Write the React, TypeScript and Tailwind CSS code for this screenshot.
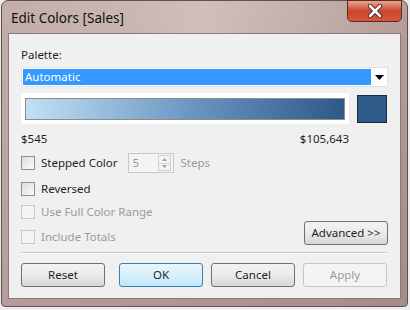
import { ReactNode } from 'react';

function Checkbox({ label, disabled }: { label: string; disabled?: boolean }) {
  return (
    <div className="flex items-center gap-[6px]">
      <div
        className={`w-[14px] h-[14px] border ${
          disabled ? 'border-[#c9c9c9] bg-[#f4f4f4]' : 'border-[#8e8f8f] bg-gradient-to-br from-[#dcdcdc] to-[#fbfbfb]'
        }`}
      />
      <span className={disabled ? 'text-[#9a9a9a]' : 'text-[#1e1e1e]'}>{label}</span>
    </div>
  );
}

function Button({ children, variant }: { children: ReactNode; variant?: 'default' | 'disabled' }) {
  let cls = 'border-[#707070] bg-gradient-to-b from-[#f2f2f2] via-[#ebebeb] to-[#d6d6d6] text-[#1e1e1e]';
  if (variant === 'default') cls = 'border-[#3c7fb1] bg-gradient-to-b from-[#eaf6fd] via-[#d9f0fc] to-[#bee6fd] text-[#1e1e1e]';
  if (variant === 'disabled') cls = 'border-[#c3c6c8] bg-[#f4f4f4] text-[#9a9a9a]';
  return (
    <div className={`w-[84px] h-[24px] rounded-[3px] border flex items-center justify-center ${cls}`}>
      {children}
    </div>
  );
}

export default function App() {
  return (
    <div className="w-[410px] h-[310px] bg-[#ececec] overflow-hidden" style={{ fontFamily: '"Noto Sans", "Open Sans", sans-serif' }}>
      <div className="ml-[1px] w-[407px] h-[307px] rounded-t-[7px] rounded-b-[4px] border border-[#5e514f] bg-gradient-to-br from-[#c4aeaa] via-[#b59e9a] to-[#a38d8b] relative">
        {/* title bar */}
        <div className="h-[32px] flex items-center pl-[9px] pt-[3px] bg-gradient-to-r from-transparent via-[#dccfcc]/60 to-transparent">
          <span className="text-[13.5px] text-[#111]">Edit Colors [Sales]</span>
        </div>
        <div className="absolute top-[-1px] right-[5px] w-[55px] h-[22px] rounded-b-[5px] border border-[#5a2a22] bg-gradient-to-b from-[#e8a593] via-[#c9442c] to-[#d8583c] flex items-center justify-center">
          <svg width="16" height="14" viewBox="0 0 16 14">
            <path d="M3 2 L13 12 M13 2 L3 12" stroke="#3a1510" strokeWidth="4.2" strokeLinecap="round" />
            <path d="M3 2 L13 12 M13 2 L3 12" stroke="#ffffff" strokeWidth="2.6" strokeLinecap="round" />
          </svg>
        </div>

        {/* client area */}
        <div className="mx-[6px] h-[266px] border border-[#8a7a77] bg-[#f0f0f0] px-[12px] pt-[14px] text-[11.5px] leading-[14px]">
          <div className="text-[#1e1e1e]">Palette:</div>

          <div className="mt-[5px] h-[20px] w-[367px] bg-white border border-[#e2e2e2] flex items-center pl-[1px]">
            <div className="h-[16px] flex-1 bg-[#3399ff] text-white flex items-center pl-[2px]">Automatic</div>
            <div className="w-[16px] flex items-center justify-center">
              <svg width="9" height="5" viewBox="0 0 9 5">
                <path d="M0 0 H9 L4.5 5 Z" fill="#000" />
              </svg>
            </div>
          </div>

          <div className="mt-[6px] flex items-center">
            <div className="w-[328px] h-[31px] bg-white flex items-center justify-center">
              <div className="w-[320px] h-[22px] border border-[#8c8c8c] bg-gradient-to-r from-[#c3e0f3] via-[#6d9ac4] to-[#2c5987]" />
            </div>
            <div className="ml-[8px] w-[30px] h-[28px] border border-[#1b2b3c] bg-[#2d5a88]" />
          </div>

          <div className="mt-[8px] w-[328px] flex justify-between text-[#1e1e1e]">
            <span>$545</span>
            <span>$105,643</span>
          </div>

          <div className="mt-[7px] h-[20px] flex items-center">
            <Checkbox label="Stepped Color" />
            <div className="ml-[10px] w-[46px] h-[20px] border border-[#c9c9c9] bg-[#f4f4f4] flex items-center">
              <span className="pl-[4px] flex-1 text-[#9a9a9a]">5</span>
              <div className="w-[13px] h-[16px] mr-[2px] border border-[#d2d2d2] flex flex-col">
                <div className="flex-1 flex items-center justify-center border-b border-[#d2d2d2]">
                  <svg width="5" height="3" viewBox="0 0 5 3"><path d="M0 3 L2.5 0 L5 3 Z" fill="#a0a0a0" /></svg>
                </div>
                <div className="flex-1 flex items-center justify-center">
                  <svg width="5" height="3" viewBox="0 0 5 3"><path d="M0 0 L2.5 3 L5 0 Z" fill="#a0a0a0" /></svg>
                </div>
              </div>
            </div>
            <span className="ml-[7px] text-[#9a9a9a]">Steps</span>
          </div>

          <div className="mt-[6px] h-[20px] flex items-center">
            <Checkbox label="Reversed" />
          </div>

          <div className="mt-[3px] h-[20px] flex items-center">
            <Checkbox label="Use Full Color Range" disabled />
          </div>

          <div className="h-[23px] flex justify-between items-end">
            <div className="mb-[1px]">
              <Checkbox label="Include Totals" disabled />
            </div>
            <div className="w-[84px] h-[24px] rounded-[3px] border border-[#707070] bg-gradient-to-b from-[#f2f2f2] via-[#ebebeb] to-[#d6d6d6] text-[#1e1e1e] flex items-center justify-center">
              Advanced &gt;&gt;
            </div>
          </div>

          <div className="mt-[7px] border-t border-[#c8c8c8] border-b border-b-white" />

          <div className="mt-[9px] flex">
            <Button>Reset</Button>
            <div className="ml-[14px]">
              <Button variant="default">OK</Button>
            </div>
            <div className="ml-[8px]">
              <Button>Cancel</Button>
            </div>
            <div className="ml-[8px]">
              <Button variant="disabled">Apply</Button>
            </div>
          </div>
        </div>
      </div>
    </div>
  );
}
